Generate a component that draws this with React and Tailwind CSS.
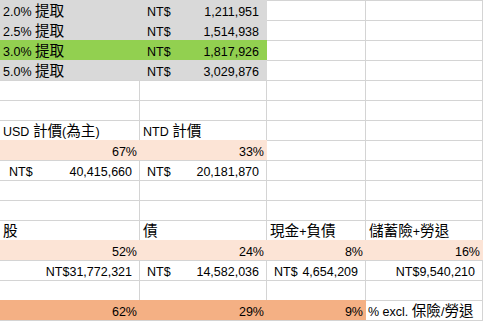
import React from "react";

const GREY = "bg-[#d9d9d9] border-[#d9d9d9]";
const GREEN = "bg-[#92d050] border-[#92d050]";
const PEACH = "bg-[#fce4d6] border-[#fce4d6]";
const ORANGE = "bg-[#f4b084] border-[#f4b084]";
const WHITE = "bg-white border-[#d4d4d4]";

const CJK = /([\u3000-\u9fff\uff00-\uffef]+)/;

function T({ children }) {
  const parts = String(children).split(CJK);
  return (
    <>
      {parts.map((p, i) =>
        CJK.test(p) ? (
          <span
            key={i}
            className="text-[14.6px]"
            style={{ fontFamily: '"Noto Sans CJK TC", sans-serif' }}
          >
            {p}
          </span>
        ) : (
          <React.Fragment key={i}>{p}</React.Fragment>
        )
      )}
    </>
  );
}

function Cell({ fill = WHITE, kind, text, val, first }) {
  let inner = null;
  if (kind === "left") {
    inner = (
      <span className="pl-[3px] whitespace-pre">
        <T>{text}</T>
      </span>
    );
  } else if (kind === "right") {
    inner = <span className="ml-auto pr-[2px] whitespace-pre">{text}</span>;
  } else if (kind === "rightacc") {
    inner = <span className="ml-auto pr-[7px] whitespace-pre">{text}</span>;
  } else if (kind === "acc") {
    inner = (
      <div
        className={`flex w-full justify-between pr-[7px] ${
          first ? "pl-[9px]" : "pl-[7px]"
        }`}
      >
        <span>NT$</span>
        <span>{val}</span>
      </div>
    );
  } else if (kind === "note") {
    inner = (
      <span className="pl-[2px] whitespace-pre">
        <T>{text}</T>
      </span>
    );
  }
  return (
    <div
      className={`h-[20px] border-t border-r flex items-end overflow-hidden ${fill}`}
    >
      {inner}
    </div>
  );
}

const E = {};

const rows = [
  [
    { fill: GREY, kind: "left", text: "2.0% 提取" },
    { fill: GREY, kind: "acc", val: "1,211,951" },
    E,
    E,
  ],
  [
    { fill: GREY, kind: "left", text: "2.5% 提取" },
    { fill: GREY, kind: "acc", val: "1,514,938" },
    E,
    E,
  ],
  [
    { fill: GREEN, kind: "left", text: "3.0% 提取" },
    { fill: GREEN, kind: "acc", val: "1,817,926" },
    E,
    E,
  ],
  [
    { fill: GREY, kind: "left", text: "5.0% 提取" },
    { fill: GREY, kind: "acc", val: "3,029,876" },
    E,
    E,
  ],
  [E, E, E, E],
  [E, E, E, E],
  [
    { kind: "left", text: "USD 計價(為主)" },
    { kind: "left", text: "NTD 計價" },
    E,
    E,
  ],
  [
    { fill: PEACH, kind: "right", text: "67%" },
    { fill: PEACH, kind: "right", text: "33%" },
    E,
    E,
  ],
  [
    { kind: "acc", val: "40,415,660", first: true },
    { kind: "acc", val: "20,181,870" },
    E,
    E,
  ],
  [E, E, E, E],
  [E, E, E, E],
  [
    { kind: "left", text: "股" },
    { kind: "left", text: "債" },
    { kind: "left", text: "現金+負債" },
    { kind: "left", text: "儲蓄險+勞退" },
  ],
  [
    { fill: PEACH, kind: "right", text: "52%" },
    { fill: PEACH, kind: "right", text: "24%" },
    { fill: PEACH, kind: "right", text: "8%" },
    { fill: PEACH, kind: "right", text: "16%" },
  ],
  [
    { kind: "rightacc", text: "NT$31,772,321" },
    { kind: "acc", val: "14,582,036" },
    { kind: "acc", val: "4,654,209" },
    { kind: "rightacc", text: "NT$9,540,210" },
  ],
  [E, E, E, E],
  [
    { fill: ORANGE, kind: "right", text: "62%" },
    { fill: ORANGE, kind: "right", text: "29%" },
    { fill: ORANGE, kind: "right", text: "9%" },
    { kind: "note", text: "% excl. 保險/勞退" },
  ],
  [E, E, E, E],
];

export default function App() {
  return (
    <div
      className="w-[483px] h-[321px] overflow-hidden bg-white text-black text-[12.5px] leading-[16px]"
      style={{ fontFamily: '"Liberation Sans", "Noto Sans CJK TC", sans-serif' }}
    >
      <div className="grid grid-cols-[140px_127px_99px_117px]">
        {rows.map((r, i) =>
          r.map((c, j) => <Cell key={`${i}-${j}`} {...c} />)
        )}
      </div>
    </div>
  );
}
